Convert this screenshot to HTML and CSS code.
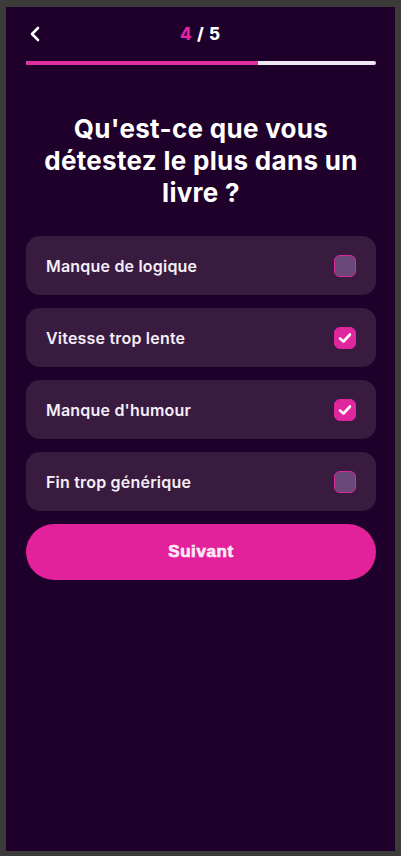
FILE: index.html
```html
<!DOCTYPE html>
<html lang="fr">
<head>
<meta charset="utf-8">
<link rel="stylesheet" href="styles.css">
</head>
<body>
<div class="frame">
  <div class="screen">
    <header class="top">
      <button class="back" aria-label="Retour">
        <svg width="12" height="16" viewBox="0 0 12 16"><path d="M9 2 L3 8 L9 14" fill="none" stroke="#fff" stroke-width="2.6" stroke-linecap="round" stroke-linejoin="round"/></svg>
      </button>
      <div class="count"><span class="cur">4</span> / 5</div>
      <span class="spacer"></span>
    </header>
    <div class="progress"><div class="fill" style="width:66.3%"></div></div>
    <h1 class="title">Qu'est-ce que vous détestez le plus dans un livre ?</h1>
    <div class="options">
      <label class="opt"><span>Manque de logique</span><span class="box"></span></label>
      <label class="opt"><span>Vitesse trop lente</span><span class="box on"><svg width="14" height="12" viewBox="0 0 14 12"><path d="M2 6.5 L5.5 9.5 L12 2.5" fill="none" stroke="#fff" stroke-width="2.6" stroke-linecap="round" stroke-linejoin="round"/></svg></span></label>
      <label class="opt"><span>Manque d'humour</span><span class="box on"><svg width="14" height="12" viewBox="0 0 14 12"><path d="M2 6.5 L5.5 9.5 L12 2.5" fill="none" stroke="#fff" stroke-width="2.6" stroke-linecap="round" stroke-linejoin="round"/></svg></span></label>
      <label class="opt"><span>Fin trop générique</span><span class="box"></span></label>
    </div>
    <button class="next">Suivant</button>
  </div>
</div>
</body>
</html>
```
FILE: styles.css
```css
* { box-sizing: border-box; }
html, body { margin: 0; padding: 0; }
body {
  background: #3b3b3a;
  width: 401px;
  height: 856px;
  overflow: hidden;
  font-family: "Inter", "Lato", sans-serif;
}
.frame {
  padding: 7px 6px 5px 6px;
  height: 856px;
}
.screen {
  background: #1f002a;
  height: 100%;
  padding: 0 19px 0 20px;
  display: flex;
  flex-direction: column;
}
.top {
  height: 54px;
  display: flex;
  align-items: center;
  justify-content: space-between;
}
.back {
  background: none;
  border: 0;
  padding: 0;
  width: 20px;
  height: 24px;
  display: flex;
  align-items: center;
  justify-content: flex-start;
  margin-left: 3px;
}
.spacer { width: 20px; }
.count {
  color: #fff;
  font-weight: 800;
  font-size: 17px;
  letter-spacing: 0.8px;
  margin-left: -4px;
}
.cur { color: #e0259f; }
.progress {
  height: 4px;
  border-radius: 2px;
  background: #eee6f2;
  overflow: hidden;
}
.fill { height: 100%; background: #dc2e9c; }
.title {
  margin: 48px 0 0;
  color: #fff;
  font-size: 26px;
  line-height: 32px;
  font-weight: 700;
  text-align: center;
  letter-spacing: 0.3px;
}
.options {
  margin-top: 27px;
  display: flex;
  flex-direction: column;
  gap: 13px;
}
.opt {
  height: 59px;
  background: #391b40;
  border-radius: 14px;
  display: flex;
  align-items: center;
  justify-content: space-between;
  padding: 0 20px 0 20px;
  color: #f5eef7;
  font-size: 16px;
  font-weight: 600;
  letter-spacing: 0.2px;
}
.box {
  width: 22px;
  height: 22px;
  border-radius: 6px;
  background: #6a4779;
  border: 1px solid #d92c9b;
  display: flex;
  align-items: center;
  justify-content: center;
}
.box.on { background: #e1259f; border-color: #e1259f; }
.next {
  margin-top: 13px;
  height: 56px;
  border: 0;
  border-radius: 28px;
  background: #e3219b;
  color: #fbeaf6;
  font-family: "Liberation Sans", Arial, sans-serif;
  font-weight: 900;
  font-size: 17px;
  -webkit-text-stroke: 0.7px #fbeaf6;
  letter-spacing: 0.6px;
}
```
